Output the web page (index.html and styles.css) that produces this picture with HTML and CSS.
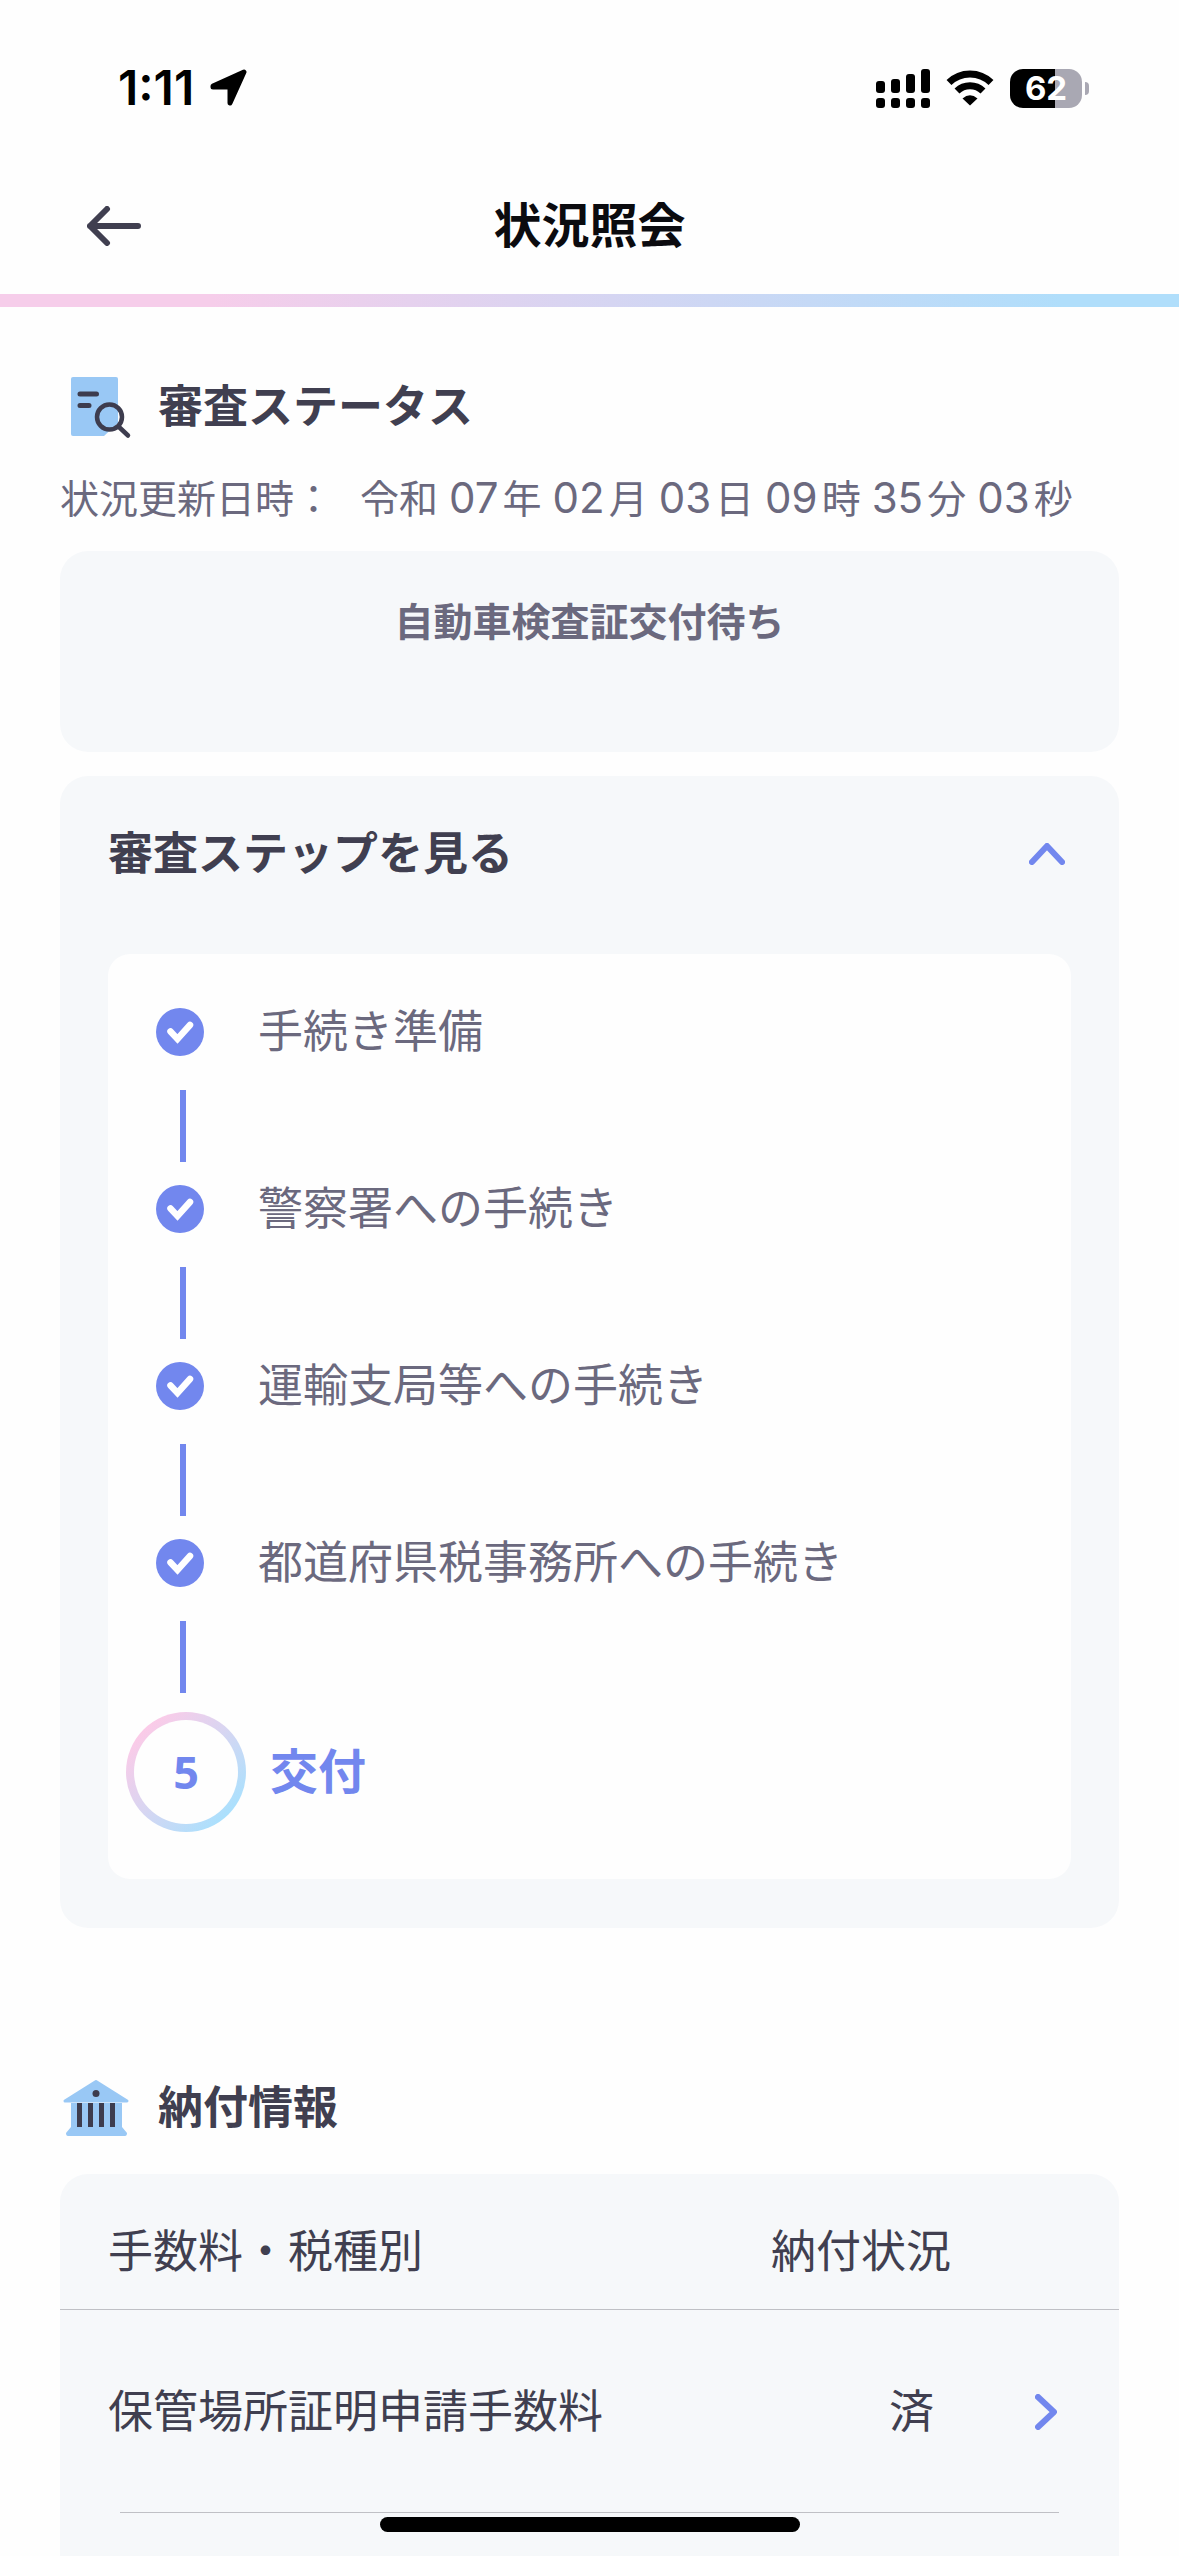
FILE: index.html
```html
<!DOCTYPE html>
<html lang="ja">
<head>
    <meta charset="UTF-8">
    <meta name="viewport" content="width=device-width, initial-scale=1.0">
    <title>状況照会</title>
    <link rel="stylesheet" href="styles.css">
</head>
<body>
    <div class="status-bar">
        <div class="status-left">
            <span class="time">1:11</span>
            <svg class="location" width="38" height="38" viewBox="0 0 38 38">
                <path d="M3 17 34 3 20 34V18H3Z" fill="#000" stroke="#000" stroke-width="5" stroke-linejoin="round"/>
            </svg>
        </div>
        <div class="status-right">
            <svg width="54" height="39" viewBox="0 0 54 39">
                <rect x="0" y="12" width="9" height="12" rx="3"/>
                <rect x="15" y="10" width="9" height="14" rx="3"/>
                <rect x="30" y="5" width="9" height="19" rx="3"/>
                <rect x="45" y="0" width="9" height="24" rx="3"/>
                <rect x="0" y="29" width="9" height="10" rx="3"/>
                <rect x="15" y="29" width="9" height="10" rx="3"/>
                <rect x="30" y="29" width="9" height="10" rx="3"/>
                <rect x="45" y="29" width="9" height="10" rx="3"/>
            </svg>
            <svg width="48" height="36" viewBox="0 0 48 36">
                <path d="M3 12.500A30 30 0 0 1 45 12.500M11 21A18.500 18.500 0 0 1 37 21" fill="none" stroke="#000" stroke-width="7"/>
                <path d="M24 35.500 16.500 28.500Q24 22 31.500 28.500Z"/>
            </svg>
            <div class="battery"><span class="battery-level">62</span></div>
        </div>
    </div>

    <header class="nav">
        <button class="back" type="button" aria-label="戻る">
            <svg width="54" height="40" viewBox="0 0 54 40">
                <path d="M20 3 3 20 20 37M3 20H51" fill="none" stroke="#403f50" stroke-width="6" stroke-linecap="round" stroke-linejoin="round"/>
            </svg>
        </button>
        <h1>状況照会</h1>
    </header>

    <main>
        <section>
            <h2>
                <svg width="72" height="64" viewBox="0 0 72 64">
                    <path d="M13 2H56Q58 2 58 4V48L44 61H13Q11 61 11 59V4Q11 2 13 2Z" fill="#99c8f5"/>
                    <path d="M20 19H36.500M20 30.500H29" stroke="#3d3c4e" stroke-width="5" stroke-linecap="round"/>
                    <circle cx="49.500" cy="42" r="12.500" fill="none" stroke="#3d3c4e" stroke-width="4.500"/>
                    <path d="M59 52 68 60.500" stroke="#3d3c4e" stroke-width="4.500" stroke-linecap="round"/>
                </svg>
                審査ステータス
            </h2>
            <p class="updated">
                <span class="updated-label">状況更新日時：</span>
                <span>令和</span>
                <span><span class="num">07</span>年</span>
                <span><span class="num">02</span>月</span>
                <span><span class="num">03</span>日</span>
                <span><span class="num">09</span>時</span>
                <span><span class="num">35</span>分</span>
                <span><span class="num">03</span>秒</span>
            </p>
            <div class="card current">自動車検査証交付待ち</div>
            <div class="card steps">
                <button class="toggle" type="button" aria-expanded="true">
                    審査ステップを見る
                    <svg width="36" height="22" viewBox="0 0 36 22">
                        <path d="M3 19 18 3 33 19" fill="none" stroke="#7287ee" stroke-width="6" stroke-linecap="round" stroke-linejoin="round"/>
                    </svg>
                </button>
                <ol class="step-list">
                    <li class="step">
                        <div class="step-row">
                            <svg width="48" height="48" viewBox="0 0 48 48">
                                <circle cx="24" cy="24" r="24" fill="#7287ee"/>
                                <path d="M14.500 23.500 21.500 31 34 17" fill="none" stroke="#fff" stroke-width="6.500" stroke-linecap="round"/>
                            </svg>
                            手続き準備
                        </div>
                    </li>
                    <li class="step">
                        <div class="step-row">
                            <svg width="48" height="48" viewBox="0 0 48 48">
                                <circle cx="24" cy="24" r="24" fill="#7287ee"/>
                                <path d="M14.500 23.500 21.500 31 34 17" fill="none" stroke="#fff" stroke-width="6.500" stroke-linecap="round"/>
                            </svg>
                            警察署への手続き
                        </div>
                    </li>
                    <li class="step">
                        <div class="step-row">
                            <svg width="48" height="48" viewBox="0 0 48 48">
                                <circle cx="24" cy="24" r="24" fill="#7287ee"/>
                                <path d="M14.500 23.500 21.500 31 34 17" fill="none" stroke="#fff" stroke-width="6.500" stroke-linecap="round"/>
                            </svg>
                            運輸支局等への手続き
                        </div>
                    </li>
                    <li class="step">
                        <div class="step-row">
                            <svg width="48" height="48" viewBox="0 0 48 48">
                                <circle cx="24" cy="24" r="24" fill="#7287ee"/>
                                <path d="M14.500 23.500 21.500 31 34 17" fill="none" stroke="#fff" stroke-width="6.500" stroke-linecap="round"/>
                            </svg>
                            都道府県税事務所への手続き
                        </div>
                    </li>
                    <li class="step-current">
                        <span class="ring"><span class="ring-number">5</span></span>
                        交付
                    </li>
                </ol>
            </div>
        </section>

        <section class="payment">
            <h2>
                <svg width="72" height="64" viewBox="0 0 72 64">
                    <path d="M36 5.500 67 25H5Z" fill="#99c8f5" stroke="#99c8f5" stroke-width="3" stroke-linejoin="round"/>
                    <path d="M11 27H62V51L67 57Q67 60 65 60H8Q6 60 6 57L11 51Z" fill="#99c8f5"/>
                    <circle cx="36" cy="17.500" r="3.500" fill="#3d3c4e"/>
                    <path d="M19.500 27V51M30.500 27V51M41.500 27V51M52.500 27V51" stroke="#3d3c4e" stroke-width="5"/>
                </svg>
                納付情報
            </h2>
            <div class="payment-card">
                <table>
                    <colgroup>
                        <col>
                        <col class="col-status">
                        <col class="col-link">
                    </colgroup>
                    <thead>
                        <tr>
                            <th scope="col">手数料・税種別</th>
                            <th scope="col" colspan="2" class="status-head">納付状況</th>
                        </tr>
                    </thead>
                    <tbody>
                        <tr>
                            <td>保管場所証明申請手数料</td>
                            <td class="status">済</td>
                            <td class="more">
                                <a href="#detail" aria-label="詳細">
                                    <svg width="22" height="36" viewBox="0 0 22 36">
                                        <path d="M3 3 19 18 3 33" fill="none" stroke="#7287ee" stroke-width="6" stroke-linecap="round" stroke-linejoin="round"/>
                                    </svg>
                                </a>
                            </td>
                        </tr>
                    </tbody>
                </table>
            </div>
        </section>
    </main>

    <div class="home-indicator"></div>
</body>
</html>
```

FILE: styles.css
```css
* {
    box-sizing: border-box;
}
body {
    margin: 0;
    min-height: 100vh;
    display: flex;
    flex-direction: column;
    background: #fefefe;
    color: #403f50;
    font-family: Inter, "Noto Sans CJK JP", sans-serif;
    font-size: 45px;
    line-height: 66px;
}
h1, h2, p, ol {
    margin: 0;
    padding: 0;
}
button {
    padding: 0;
    border: none;
    background: none;
    color: inherit;
    font: inherit;
    cursor: pointer;
}
svg {
    display: block;
    flex-shrink: 0;
}

/* Status bar */
.status-bar {
    display: flex;
    justify-content: space-between;
    height: 120px;
    padding: 56px 88px 0 118px;
    color: #000;
}
.status-left {
    display: flex;
    align-items: center;
    gap: 16px;
}
.time {
    font-size: 48px;
    font-weight: 600;
}
.status-right {
    display: flex;
    align-items: center;
    gap: 16px;
}
.battery {
    position: relative;
    width: 72px;
    height: 39px;
    margin-right: 9px;
    border-radius: 13px;
    background: linear-gradient(to right, #000 63%, #a9a8b3 63%);
    color: #fff;
    font-size: 33px;
    font-weight: 700;
    line-height: 39px;
    text-align: center;
}
.battery::after {
    content: "";
    position: absolute;
    top: 13px;
    right: -7px;
    width: 4px;
    height: 13px;
    border-radius: 0 4px 4px 0;
    background: #a9a8b3;
}

/* Header */
.nav {
    display: grid;
    grid-template-columns: 1fr auto 1fr;
    align-items: center;
    height: 187px;
    padding: 38px 87px 0;
    border-bottom: 13px solid;
    border-image: linear-gradient(to right, #f6cdea 18%, #b0defb 90%) 1;
}
.back {
    justify-self: start;
}
h1 {
    color: #0b0b0f;
    font-size: 48px;
    font-weight: 700;
}

main {
    flex: 1;
    display: flex;
    flex-direction: column;
    padding: 67px 60px 0;
}
h2 {
    display: flex;
    align-items: center;
    gap: 26px;
    font-size: 45px;
    font-weight: 700;
}
.updated {
    display: flex;
    gap: 11px;
    margin: 35px 0 28px;
    color: #6b697e;
    font-size: 39px;
    line-height: 48px;
    white-space: nowrap;
}
.updated-label {
    margin-right: 16px;
}
.num {
    margin-right: 4px;
    font-size: 42px;
    line-height: 1;
}
.card {
    border-radius: 28px;
    background: #f6f8fa;
}
.current {
    padding: 47px 48px 106px;
    color: #6b697e;
    font-size: 39px;
    font-weight: 700;
    line-height: 48px;
    text-align: center;
}

/* Steps */
.steps {
    margin-top: 24px;
    padding: 45px 48px 49px;
}
.toggle {
    display: flex;
    align-items: center;
    justify-content: space-between;
    width: 100%;
    padding-right: 6px;
    font-weight: 700;
}
.step-list {
    margin-top: 67px;
    padding: 45px 18px 47px;
    border-radius: 22px;
    background: #fefefe;
    list-style: none;
}
.step {
    color: #6b697e;
}
.step-row {
    display: flex;
    align-items: center;
    gap: 54px;
    padding-left: 30px;
}
.step::after {
    content: "";
    display: block;
    width: 6px;
    height: 72px;
    margin: 25px 0 14px 54px;
    background: #7287ee;
}
.step-current {
    display: flex;
    align-items: center;
    gap: 24px;
    padding-top: 5px;
    color: #7287ee;
    font-size: 48px;
    font-weight: 700;
}
.ring {
    width: 120px;
    height: 120px;
    padding: 8px;
    border-radius: 50%;
    background: linear-gradient(135deg, #fbcbe8 15%, #d6d6f2 50%, #abe0fd 85%);
}
.ring-number {
    display: flex;
    align-items: center;
    justify-content: center;
    height: 100%;
    border-radius: 50%;
    background: #fefefe;
    font-family: "Noto Sans", sans-serif;
    font-size: 45px;
}

/* Payment */
.payment {
    flex: 1;
    display: flex;
    flex-direction: column;
    margin-top: 147px;
}
.payment-card {
    flex: 1;
    margin-top: 33px;
    border-radius: 28px 28px 0 0;
    background: #f6f8fa;
}
table {
    width: 100%;
    border-collapse: collapse;
    table-layout: fixed;
}
.col-status {
    width: 163px;
}
.col-link {
    width: 185px;
}
th {
    padding: 45px 0 24px 48px;
    border-bottom: 1px solid #bfc0c5;
    font-weight: 400;
    text-align: left;
}
.status-head {
    padding-left: 0;
}
td {
    padding: 69px 0 68px 48px;
}
.status {
    padding-left: 0;
    text-align: right;
}
.more {
    padding: 0 62px 0 0;
}
.more a {
    display: flex;
    justify-content: flex-end;
}
tbody tr {
    background: linear-gradient(#bfc0c5, #bfc0c5) no-repeat center bottom / calc(100% - 120px) 1px;
}

.home-indicator {
    position: fixed;
    bottom: 24px;
    left: 50%;
    width: 420px;
    height: 15px;
    margin-left: -210px;
    border-radius: 8px;
    background: #000;
}
```
